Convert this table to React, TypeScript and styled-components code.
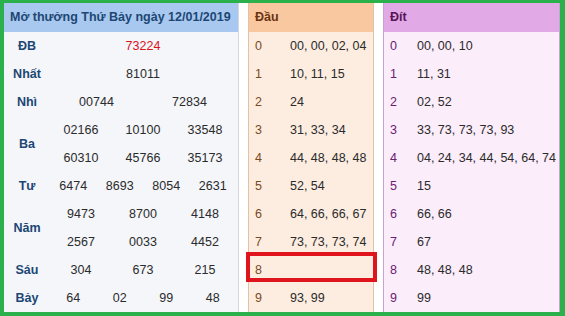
import styled, { createGlobalStyle } from 'styled-components';

const GlobalStyle = createGlobalStyle`
  html, body {
    margin: 0;
    padding: 0;
    background: #ffffff;
  }
  body {
    font-family: 'Liberation Sans', Arial, sans-serif;
  }
`;

interface Prize {
  label: string;
  lines: string[][];
  special?: boolean;
}

const prizes: Prize[] = [
  { label: 'ĐB', lines: [['73224']], special: true },
  { label: 'Nhất', lines: [['81011']] },
  { label: 'Nhì', lines: [['00744', '72834']] },
  {
    label: 'Ba',
    lines: [
      ['02166', '10100', '33548'],
      ['60310', '45766', '35173'],
    ],
  },
  { label: 'Tư', lines: [['6474', '8693', '8054', '2631']] },
  {
    label: 'Năm',
    lines: [
      ['9473', '8700', '4148'],
      ['2567', '0033', '4452'],
    ],
  },
  { label: 'Sáu', lines: [['304', '673', '215']] },
  { label: 'Bảy', lines: [['64', '02', '99', '48']] },
];

const dau = [
  '00, 00, 02, 04',
  '10, 11, 15',
  '24',
  '31, 33, 34',
  '44, 48, 48, 48',
  '52, 54',
  '64, 66, 66, 67',
  '73, 73, 73, 74',
  '',
  '93, 99',
];

const dit = [
  '00, 00, 10',
  '11, 31',
  '02, 52',
  '33, 73, 73, 73, 93',
  '04, 24, 34, 44, 54, 64, 74',
  '15',
  '66, 66',
  '67',
  '48, 48, 48',
  '99',
];

/** kết quả xổ số + bảng đầu / đít */
const App = () => {
  return (
    <>
      <GlobalStyle />
      <FrameS>
        <ResultPanelS>
          <ResultHeaderS>Mở thưởng Thứ Bảy ngày 12/01/2019</ResultHeaderS>
          {prizes.map((prize) => (
            <PrizeRowS key={prize.label}>
              <PrizeLabelS>{prize.label}</PrizeLabelS>
              <PrizeLinesS>
                {prize.lines.map((line, i) => (
                  <PrizeLineS key={i}>
                    {line.map((num, j) => (
                      <PrizeNumS key={j} special={prize.special}>
                        {num}
                      </PrizeNumS>
                    ))}
                  </PrizeLineS>
                ))}
              </PrizeLinesS>
            </PrizeRowS>
          ))}
        </ResultPanelS>

        <Gap />

        <LotoPanel title='Đầu' data={dau} tone='dau' highlight={8} />

        <Gap />

        <LotoPanel title='Đít' data={dit} tone='dit' />
      </FrameS>
    </>
  );
};

export default App;

type Tone = 'dau' | 'dit';

const tones = {
  dau: {
    head: '#f9c8a0',
    headText: '#6b3410',
    body: '#fdede1',
    border: '#e2c2a6',
    digit: '#7a4a1c',
    width: 126,
    digitCol: 35,
  },
  dit: {
    head: '#e1a9e5',
    headText: '#561556',
    body: '#fbedfa',
    border: '#caa2cf',
    digit: '#6a2172',
    width: 177,
    digitCol: 27,
  },
};

interface LotoPanelProps {
  title: string;
  data: string[];
  tone: Tone;
  highlight?: number;
}

const LotoPanel = ({ title, data, tone, highlight }: LotoPanelProps) => {
  return (
    <LotoPanelS tone={tone}>
      <LotoHeaderS tone={tone}>{title}</LotoHeaderS>
      {data.map((value, i) => (
        <LotoRowS key={i} tone={tone} marked={highlight === i}>
          <LotoDigitS tone={tone}>{i}</LotoDigitS>
          <LotoValueS>{value}</LotoValueS>
        </LotoRowS>
      ))}
    </LotoPanelS>
  );
};

const FrameS = styled.div`
  display: flex;
  width: 565px;
  height: 316px;
  box-sizing: border-box;
  border-style: solid;
  border-color: #2bb14b;
  border-width: 3px 5px 4px 4px;
  background: #ffffff;
`;

const Gap = styled.div`
  width: 9px;
  flex-shrink: 0;
`;

const ResultPanelS = styled.div`
  width: 235px;
  flex-shrink: 0;
  box-sizing: border-box;
  background: #f4f6fa;
  border-right: 1px solid #d3d8e0;
  display: flex;
  flex-direction: column;
`;

const ResultHeaderS = styled.div`
  height: 29px;
  line-height: 29px;
  background: #a8c8ef;
  color: #1d4774;
  font-weight: bold;
  font-size: 12.5px;
  padding-left: 6px;
  white-space: nowrap;
`;

const PrizeRowS = styled.div`
  display: flex;
  align-items: center;
`;

const PrizeLabelS = styled.div`
  width: 46px;
  text-align: center;
  font-weight: bold;
  font-size: 12.5px;
  color: #1d4774;
`;

const PrizeLinesS = styled.div`
  width: 186px;
  display: flex;
  flex-direction: column;
`;

const PrizeLineS = styled.div`
  display: flex;
  height: 28px;
  align-items: center;
`;

const PrizeNumS = styled.div<{ special?: boolean }>`
  flex: 1;
  text-align: center;
  font-size: 12.5px;
  color: ${(props) => (props.special ? '#d9141e' : '#2b2b2b')};
`;

const LotoPanelS = styled.div<{ tone: Tone }>`
  width: ${(props) => tones[props.tone].width}px;
  flex-shrink: 0;
  box-sizing: border-box;
  background: ${(props) => tones[props.tone].body};
  border-left: 1px solid ${(props) => tones[props.tone].border};
  border-right: 1px solid ${(props) => tones[props.tone].border};
  display: flex;
  flex-direction: column;
`;

const LotoHeaderS = styled.div<{ tone: Tone }>`
  height: 29px;
  line-height: 29px;
  background: ${(props) => tones[props.tone].head};
  color: ${(props) => tones[props.tone].headText};
  font-weight: bold;
  font-size: 12.5px;
  padding-left: 6px;
`;

const LotoRowS = styled.div<{ tone: Tone; marked?: boolean }>`
  position: relative;
  display: flex;
  align-items: center;
  height: 28px;
  padding-left: 6px;
  font-size: 12.5px;
  white-space: nowrap;

  ${(props) =>
    props.marked
      ? `&::after {
          content: '';
          position: absolute;
          left: -3px;
          right: -4px;
          top: -4px;
          bottom: 2px;
          border: 4px solid #e0141d;
        }`
      : ''}
`;

const LotoDigitS = styled.div<{ tone: Tone }>`
  width: ${(props) => tones[props.tone].digitCol}px;
  flex-shrink: 0;
  color: ${(props) => tones[props.tone].digit};
`;

const LotoValueS = styled.div`
  color: #2b2b2b;
`;
